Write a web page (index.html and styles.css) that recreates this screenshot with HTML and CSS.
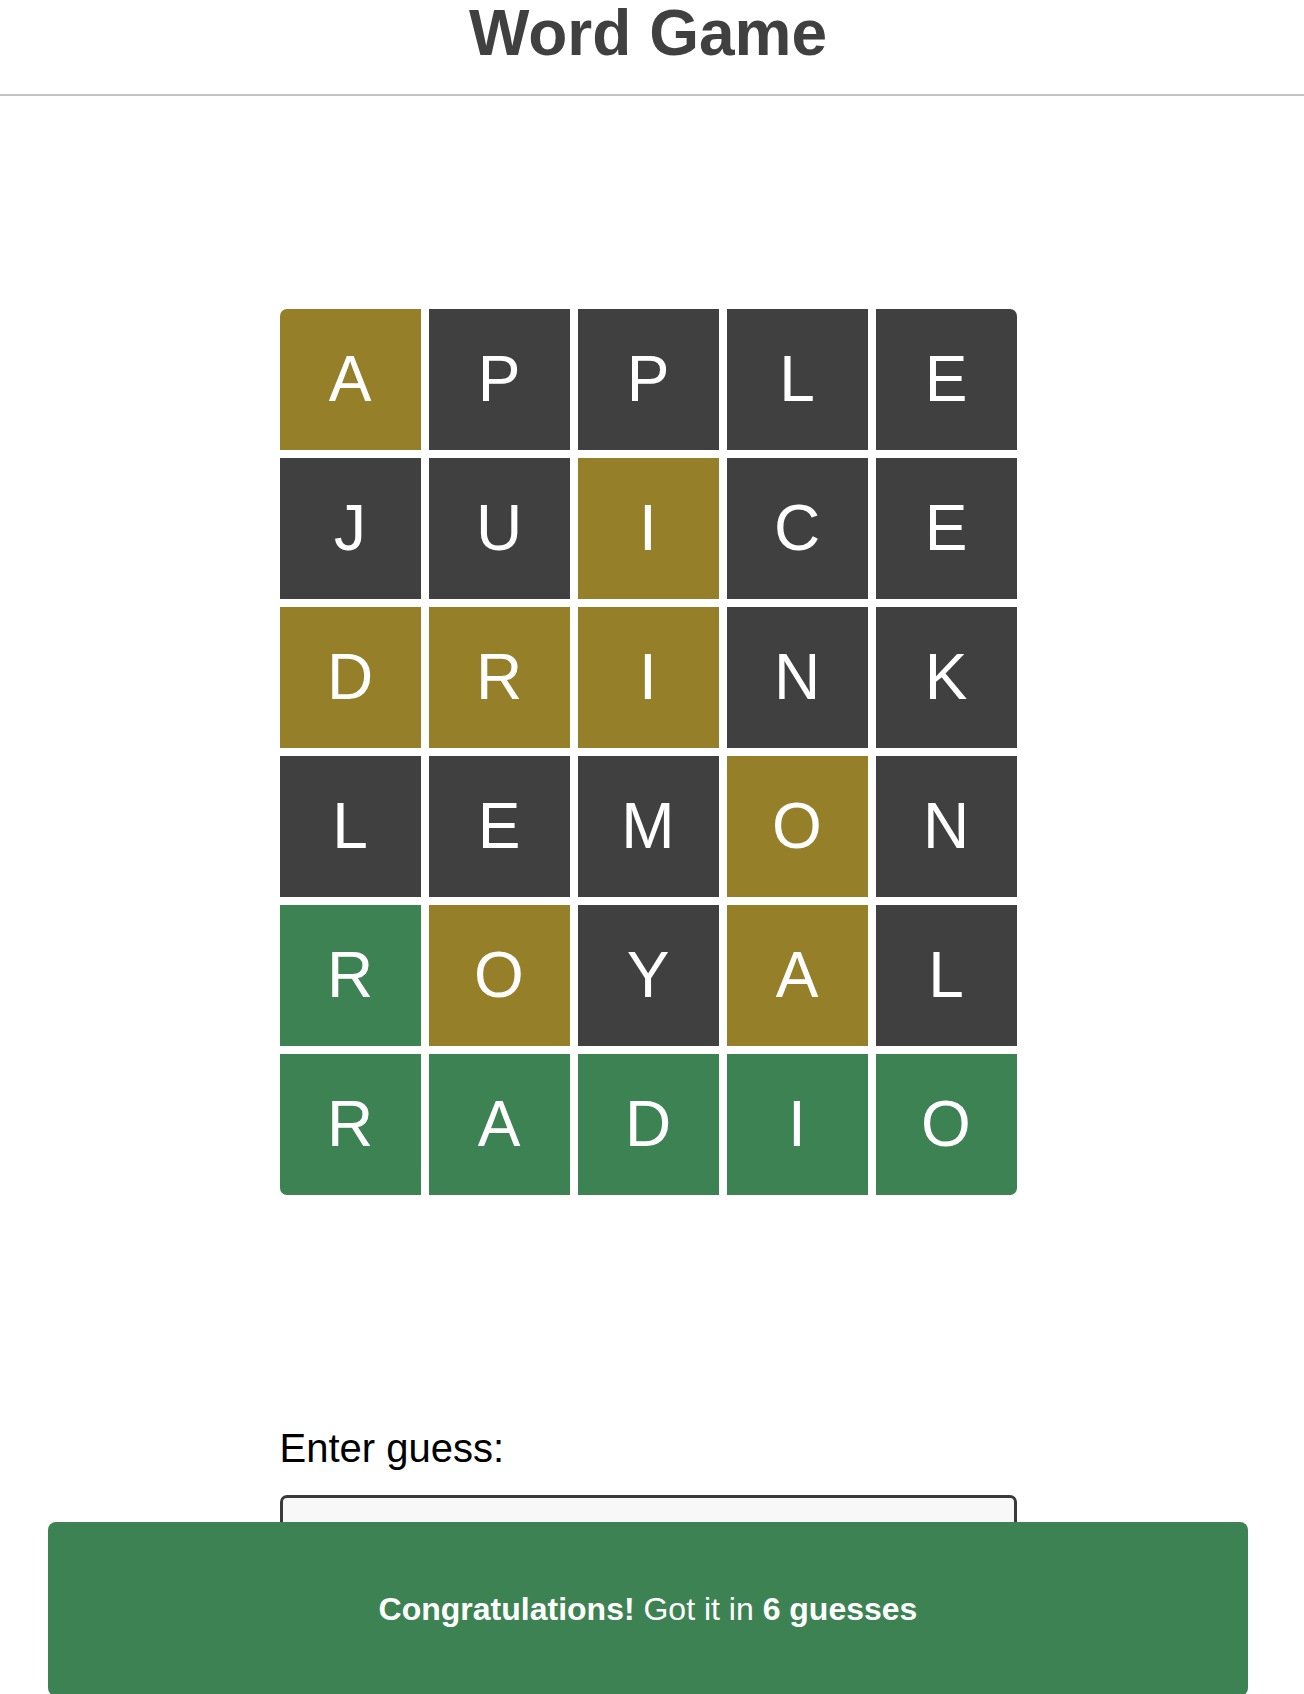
FILE: index.html
```html
<!DOCTYPE html>
<html lang="en">
<head>
<meta charset="utf-8">
<title>Word Game</title>
<link rel="stylesheet" href="styles.css">
</head>
<body>
<header class="header">
  <h1 class="title">Word Game</h1>
</header>
<div class="page">
  <main class="main">
    <div class="grid">
      <div class="tile present">A</div><div class="tile absent">P</div><div class="tile absent">P</div><div class="tile absent">L</div><div class="tile absent">E</div>
      <div class="tile absent">J</div><div class="tile absent">U</div><div class="tile present">I</div><div class="tile absent">C</div><div class="tile absent">E</div>
      <div class="tile present">D</div><div class="tile present">R</div><div class="tile present">I</div><div class="tile absent">N</div><div class="tile absent">K</div>
      <div class="tile absent">L</div><div class="tile absent">E</div><div class="tile absent">M</div><div class="tile present">O</div><div class="tile absent">N</div>
      <div class="tile correct">R</div><div class="tile present">O</div><div class="tile absent">Y</div><div class="tile present">A</div><div class="tile absent">L</div>
      <div class="tile correct">R</div><div class="tile correct">A</div><div class="tile correct">D</div><div class="tile correct">I</div><div class="tile correct">O</div>
    </div>
    <form class="guess-form">
      <label class="guess-label" for="guess">Enter guess:</label>
      <input class="guess-input" id="guess" type="text">
    </form>
  </main>
</div>
<div class="toast-wrap">
  <div class="toast"><strong>Congratulations!</strong> Got it in <strong>6 guesses</strong></div>
</div>
</body>
</html>
```
FILE: styles.css
```css
html, body {
  margin: 0;
  padding: 0;
  background: #ffffff;
}
body {
  font-family: "Liberation Sans", Arial, Helvetica, sans-serif;
  color: #000;
}
.page {
  padding-right: 8px;
}
.header {
  height: 96px;
  box-sizing: border-box;
  padding: 1px 8px 0 0;
  border-bottom: 2px solid #c2c2c2;
  text-align: center;
}
.title {
  margin: 0;
  font-size: 64px;
  line-height: 64px;
  font-weight: 700;
  color: #404040;
}
.main {
  display: flex;
  flex-direction: column;
  align-items: center;
  padding-top: 213px;
}
.grid {
  display: grid;
  grid-template-columns: repeat(5, 141px);
  grid-auto-rows: 141px;
  gap: 8px;
  border-radius: 7px;
  overflow: hidden;
}
.tile {
  display: flex;
  align-items: center;
  justify-content: center;
  color: #ffffff;
  font-size: 64px;
  font-weight: 400;
  line-height: 1;
  padding-bottom: 2px;
  box-sizing: border-box;
}
.absent { background: #404040; }
.present { background: #957f29; }
.correct { background: #3d8253; }
.guess-form {
  width: 737px;
  margin-top: 231px;
  display: flex;
  flex-direction: column;
}
.guess-label {
  font-size: 40px;
  color: #000;
}
.guess-input {
  margin-top: 24px;
  height: 64px;
  box-sizing: border-box;
  border: 3px solid #3a3a3a;
  border-radius: 7px;
  background: #f8f8f8;
  font-size: 32px;
  font-family: inherit;
}
.toast-wrap {
  position: fixed;
  left: 0;
  right: 8px;
  bottom: -2px;
  display: flex;
  justify-content: center;
}
.toast {
  width: 1200px;
  height: 174px;
  background: #3d8253;
  border-radius: 8px;
  color: #ffffff;
  font-size: 32px;
  display: flex;
  align-items: center;
  justify-content: center;
  white-space: pre;
}
.toast strong {
  font-weight: 700;
}
```
